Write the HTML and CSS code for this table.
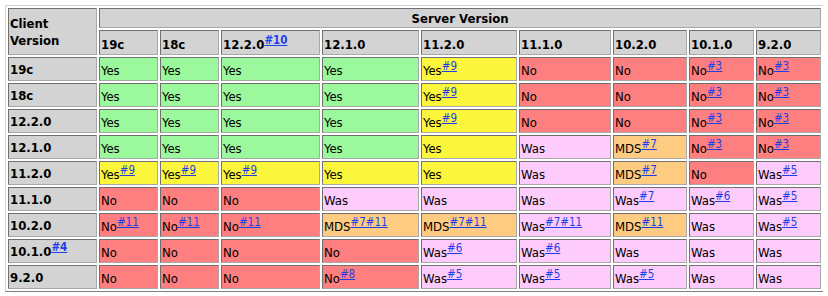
FILE: index.html
```html
<!DOCTYPE html>
<html lang="en">
<head>
  <meta charset="UTF-8">
  <title>Client / Server Interoperability</title>
  <link rel="stylesheet" href="styles.css">
</head>
<body>

  <!-- client / server support matrix -->
  <table class="matrix">
    <colgroup>
      <col class="c-client">
      <col class="c-19c">
      <col class="c-18c">
      <col class="c-1220">
      <col class="c-1210">
      <col class="c-1120">
      <col class="c-1110">
      <col class="c-1020">
      <col class="c-1010">
      <col class="c-920">
    </colgroup>
    <tr class="head-top">
      <th rowspan="2" class="client">Client<br>Version</th>
      <th colspan="9" class="server">Server Version</th>
    </tr>
    <tr class="head-sub">
      <th>19c</th>
      <th>18c</th>
      <th>12.2.0<sup><a href="#n10">#10</a></sup></th>
      <th>12.1.0</th>
      <th>11.2.0</th>
      <th>11.1.0</th>
      <th>10.2.0</th>
      <th>10.1.0</th>
      <th>9.2.0</th>
    </tr>
    <tr>
      <th>19c</th>
      <td class="yes">Yes</td>
      <td class="yes">Yes</td>
      <td class="yes">Yes</td>
      <td class="yes">Yes</td>
      <td class="cond">Yes<sup><a href="#n9">#9</a></sup></td>
      <td class="no">No</td>
      <td class="no">No</td>
      <td class="no">No<sup><a href="#n3">#3</a></sup></td>
      <td class="no">No<sup><a href="#n3">#3</a></sup></td>
    </tr>
    <tr>
      <th>18c</th>
      <td class="yes">Yes</td>
      <td class="yes">Yes</td>
      <td class="yes">Yes</td>
      <td class="yes">Yes</td>
      <td class="cond">Yes<sup><a href="#n9">#9</a></sup></td>
      <td class="no">No</td>
      <td class="no">No</td>
      <td class="no">No<sup><a href="#n3">#3</a></sup></td>
      <td class="no">No<sup><a href="#n3">#3</a></sup></td>
    </tr>
    <tr>
      <th>12.2.0</th>
      <td class="yes">Yes</td>
      <td class="yes">Yes</td>
      <td class="yes">Yes</td>
      <td class="yes">Yes</td>
      <td class="cond">Yes<sup><a href="#n9">#9</a></sup></td>
      <td class="no">No</td>
      <td class="no">No</td>
      <td class="no">No<sup><a href="#n3">#3</a></sup></td>
      <td class="no">No<sup><a href="#n3">#3</a></sup></td>
    </tr>
    <tr>
      <th>12.1.0</th>
      <td class="yes">Yes</td>
      <td class="yes">Yes</td>
      <td class="yes">Yes</td>
      <td class="yes">Yes</td>
      <td class="cond">Yes</td>
      <td class="was">Was</td>
      <td class="mds">MDS<sup><a href="#n7">#7</a></sup></td>
      <td class="no">No<sup><a href="#n3">#3</a></sup></td>
      <td class="no">No<sup><a href="#n3">#3</a></sup></td>
    </tr>
    <tr>
      <th>11.2.0</th>
      <td class="cond">Yes<sup><a href="#n9">#9</a></sup></td>
      <td class="cond">Yes<sup><a href="#n9">#9</a></sup></td>
      <td class="cond">Yes<sup><a href="#n9">#9</a></sup></td>
      <td class="cond">Yes</td>
      <td class="cond">Yes</td>
      <td class="was">Was</td>
      <td class="mds">MDS<sup><a href="#n7">#7</a></sup></td>
      <td class="no">No</td>
      <td class="was">Was<sup><a href="#n5">#5</a></sup></td>
    </tr>
    <tr>
      <th>11.1.0</th>
      <td class="no">No</td>
      <td class="no">No</td>
      <td class="no">No</td>
      <td class="was">Was</td>
      <td class="was">Was</td>
      <td class="was">Was</td>
      <td class="was">Was<sup><a href="#n7">#7</a></sup></td>
      <td class="was">Was<sup><a href="#n6">#6</a></sup></td>
      <td class="was">Was<sup><a href="#n5">#5</a></sup></td>
    </tr>
    <tr>
      <th>10.2.0</th>
      <td class="no">No<sup><a href="#n11">#11</a></sup></td>
      <td class="no">No<sup><a href="#n11">#11</a></sup></td>
      <td class="no">No<sup><a href="#n11">#11</a></sup></td>
      <td class="mds">MDS<sup><a href="#n7">#7</a><a href="#n11">#11</a></sup></td>
      <td class="mds">MDS<sup><a href="#n7">#7</a><a href="#n11">#11</a></sup></td>
      <td class="was">Was<sup><a href="#n7">#7</a><a href="#n11">#11</a></sup></td>
      <td class="mds">MDS<sup><a href="#n11">#11</a></sup></td>
      <td class="was">Was</td>
      <td class="was">Was<sup><a href="#n5">#5</a></sup></td>
    </tr>
    <tr>
      <th>10.1.0<sup><a href="#n4">#4</a></sup></th>
      <td class="no">No</td>
      <td class="no">No</td>
      <td class="no">No</td>
      <td class="no">No</td>
      <td class="was">Was<sup><a href="#n6">#6</a></sup></td>
      <td class="was">Was<sup><a href="#n6">#6</a></sup></td>
      <td class="was">Was</td>
      <td class="was">Was</td>
      <td class="was">Was</td>
    </tr>
    <tr>
      <th>9.2.0</th>
      <td class="no">No</td>
      <td class="no">No</td>
      <td class="no">No</td>
      <td class="no">No<sup><a href="#n8">#8</a></sup></td>
      <td class="was">Was<sup><a href="#n5">#5</a></sup></td>
      <td class="was">Was<sup><a href="#n5">#5</a></sup></td>
      <td class="was">Was<sup><a href="#n5">#5</a></sup></td>
      <td class="was">Was</td>
      <td class="was">Was</td>
    </tr>
  </table>

</body>
</html>
```

FILE: styles.css
```css
body {
  margin: 5px;
  background: #fff;
  font-family: "DejaVu Sans Condensed", "DejaVu Sans", sans-serif;
  font-size: 13px;
  color: #000;
}

.matrix {
  table-layout: fixed;
  width: 819px;
  border-collapse: separate;
  border-spacing: 2px;
  border: 1px solid;
  border-color: #cfcfcf #808080 #808080 #cfcfcf;
}

.c-client { width: 89px; }
.c-19c { width: 59px; }
.c-18c { width: 59px; }
.c-1220 { width: 99px; }
.c-1210 { width: 97px; }
.c-1120 { width: 96px; }
.c-1110 { width: 92px; }
.c-1020 { width: 74px; }
.c-1010 { width: 65px; }
.c-920 { width: 65px; }

.matrix th,
.matrix td {
  box-sizing: border-box;
  padding: 1px;
  border: 1px solid;
  border-color: #707070 #a8a8a8 #a8a8a8 #707070;
  text-align: left;
  vertical-align: middle;
  white-space: nowrap;
  overflow: hidden;
}

.matrix th {
  background: #d3d3d3;
  font-weight: bold;
}

.matrix td {
  padding-top: 3px;
}

.matrix tr {
  height: 24px;
}

.matrix .head-top {
  height: 20px;
}

.matrix .head-sub {
  height: 25px;
}

.matrix .head-sub th {
  padding-top: 4px;
}

.matrix .server {
  text-align: center;
}

.matrix .client {
  vertical-align: top;
  padding-top: 6px;
  line-height: 17px;
}

sup {
  font-size: 11.5px;
  line-height: 0;
  vertical-align: 5px;
}

a {
  color: #1f3fe6;
}

.yes { background: #9cf89c; }
.cond { background: #fbf63c; }
.no { background: #fe7f7f; }
.was { background: #fdccfd; }
.mds { background: #fdcc82; }
```
